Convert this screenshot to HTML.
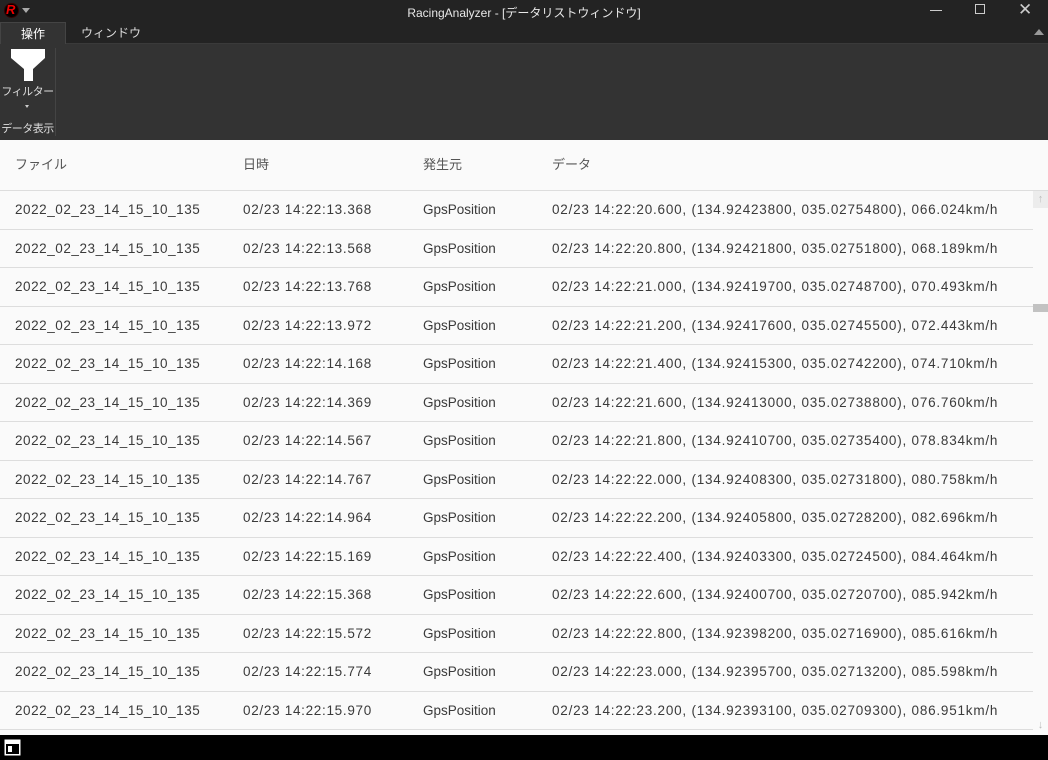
<!DOCTYPE html>
<html><head><meta charset="utf-8"><style>
*{margin:0;padding:0;box-sizing:border-box}
body{width:1048px;height:760px;overflow:hidden;background:#fafafa;font-family:"Liberation Sans","Noto Sans CJK JP",sans-serif;position:relative}
.title{position:absolute;left:0;top:0;width:1048px;height:22px;background:#232323;color:#e8e8e8;font-size:12px}
.tabs{position:absolute;left:0;top:22px;width:1048px;height:22px;background:#232323;border-bottom:1px solid #3a3a3a}
.ribbon{position:absolute;left:0;top:44px;width:1048px;height:96px;background:#333}
.tab{position:absolute;top:0;height:22px;font-size:12px;color:#ddd;line-height:22px;text-align:center}
.hdr{position:absolute;top:140px;left:0;width:1048px;height:51px;border-bottom:1px solid #ddd;font-size:13px;color:#555}
.row{position:absolute;left:0;width:1033px;height:38.5px;border-bottom:1px solid #ddd;font-size:13.5px;color:#3a3a3a}
.c{position:absolute;top:0;line-height:37px;white-space:nowrap}
.status{position:absolute;left:0;top:735px;width:1048px;height:25px;background:#000}
.rl{position:absolute;left:0;width:55px;text-align:center;color:#ddd;font-size:11px;white-space:nowrap;letter-spacing:-0.5px}
</style></head><body>
<div class="title">
 <div style="position:absolute;left:4px;top:3px;width:15px;height:15px;border-radius:50%;background:#000;border:1px solid #300"></div>
 <div style="position:absolute;left:6px;top:2px;color:#e00;font-weight:bold;font-style:italic;font-size:13px">R</div>
 <div style="position:absolute;left:22px;top:8px;width:0;height:0;border-left:4px solid transparent;border-right:4px solid transparent;border-top:5px solid #aaa"></div>
 <div style="position:absolute;left:0;width:1048px;top:4px;text-align:center">RacingAnalyzer - [データリストウィンドウ]</div>
 <div style="position:absolute;left:930px;top:10px;width:12px;height:1px;background:#ccc"></div>
 <div style="position:absolute;left:975px;top:4px;width:10px;height:10px;border:1px solid #ccc"></div>
 <div style="position:absolute;left:1018px;top:0px;color:#ccc;font-size:17px">✕</div>
</div>
<div class="tabs">
 <div class="tab" style="left:0;width:66px;background:#333;border:1px solid #444;border-bottom:none;color:#fff">操作</div>
 <div class="tab" style="left:80px;width:62px">ウィンドウ</div>
 <div style="position:absolute;left:1034px;top:7px;width:0;height:0;border-left:5px solid transparent;border-right:5px solid transparent;border-bottom:6px solid #999"></div>
</div>
<div class="ribbon">
 <svg style="position:absolute;left:11px;top:5px" width="34" height="32"><path d="M0 0H34V9L22 20V32H13V20L0 9Z" fill="#fff"/></svg>
 <div class="rl" style="top:39px">フィルター</div>
 <div style="position:absolute;left:25px;top:61px;width:0;height:0;border-left:2px solid transparent;border-right:2px solid transparent;border-top:3px solid #ccc"></div>
 <div class="rl" style="top:76px">データ表示</div>
 <div style="position:absolute;left:55px;top:4px;width:1px;height:88px;background:#444"></div>
</div>
<div class="hdr">
 <div class="c" style="left:15px;line-height:50px">ファイル</div>
 <div class="c" style="left:243px;line-height:50px">日時</div>
 <div class="c" style="left:423px;line-height:50px">発生元</div>
 <div class="c" style="left:552px;line-height:50px">データ</div>
</div>
<div id="rows"></div>
<div style="position:absolute;left:1033px;top:191px;width:15px;height:544px;background:#fafafa"></div>
<div style="position:absolute;left:1033px;top:191px;width:15px;height:17px;background:#ececec;color:#bbb;font-size:11px;text-align:center;line-height:17px">↑</div>
<div style="position:absolute;left:1033px;top:304px;width:15px;height:8px;background:#c2c2c2"></div>
<div style="position:absolute;left:1033px;top:717px;width:15px;height:17px;color:#bbb;font-size:11px;text-align:center;line-height:17px">↓</div>
<div class="status">
 <svg style="position:absolute;left:4px;top:4px" width="17" height="17"><rect x="0.5" y="0.5" width="16" height="16" fill="#fff"/><rect x="2" y="5" width="13" height="10" fill="#000"/><rect x="4" y="7" width="4" height="6" fill="#fff"/></svg>
</div>
<script>
var t=["13.368","13.568","13.768","13.972","14.168","14.369","14.567","14.767","14.964","15.169","15.368","15.572","15.774","15.970"];
var d=["20.600, (134.92423800, 035.02754800), 066.024","20.800, (134.92421800, 035.02751800), 068.189","21.000, (134.92419700, 035.02748700), 070.493","21.200, (134.92417600, 035.02745500), 072.443","21.400, (134.92415300, 035.02742200), 074.710","21.600, (134.92413000, 035.02738800), 076.760","21.800, (134.92410700, 035.02735400), 078.834","22.000, (134.92408300, 035.02731800), 080.758","22.200, (134.92405800, 035.02728200), 082.696","22.400, (134.92403300, 035.02724500), 084.464","22.600, (134.92400700, 035.02720700), 085.942","22.800, (134.92398200, 035.02716900), 085.616","23.000, (134.92395700, 035.02713200), 085.598","23.200, (134.92393100, 035.02709300), 086.951"];
var h="";
for(var i=0;i<14;i++){h+='<div class="row" style="top:'+(191+i*38.5)+'px"><div class="c" style="left:15px;letter-spacing:0.55px">2022_02_23_14_15_10_135</div><div class="c" style="left:243px;letter-spacing:0.7px">02/23 14:22:'+t[i]+'</div><div class="c" style="left:423px">GpsPosition</div><div class="c" style="left:552px;letter-spacing:0.78px">02/23 14:22:'+d[i]+'km/h</div></div>';}
document.getElementById("rows").innerHTML=h;
</script>
</body></html>
